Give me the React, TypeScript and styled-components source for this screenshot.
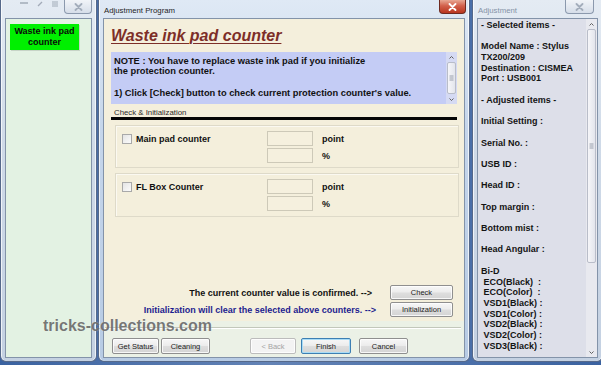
import styled, { createGlobalStyle } from "styled-components";

const GlobalStyle = createGlobalStyle`
  html, body {
    margin: 0;
    padding: 0;
  }
  body {
    width: 601px;
    height: 365px;
    overflow: hidden;
    background: #3c64a0;
    font-family: "Liberation Sans", Arial, sans-serif;
  }
`;

const Desktop = styled.div`
  position: relative;
  display: flex;
  align-items: flex-start;
  width: 601px;
  height: 365px;
  overflow: hidden;
  background: linear-gradient(90deg, #3a62a0 0%, #6383b6 45%, #3a62a0 100%);
`;

const Window = styled.div<{ $width: number; $gap?: number; $active?: boolean }>`
  display: flex;
  flex-direction: column;
  flex-shrink: 0;
  width: ${(p) => p.$width}px;
  height: 362px;
  margin-left: ${(p) => p.$gap ?? 0}px;
  padding: 0 4px 3px 4px;
  box-sizing: border-box;
  border: 1px solid #56698a;
  border-top: none;
  border-radius: 0 0 6px 6px;
  background: ${(p) =>
    p.$active
      ? "linear-gradient(180deg, #dfe9f5 0%, #c6d6eb 35%, #b7cbe4 100%)"
      : "linear-gradient(180deg, #e4ebf3 0%, #cfdae8 40%, #c4d1e2 100%)"};
  box-shadow: inset 1px 0 0 rgba(255, 255, 255, 0.7), inset -1px 0 0 rgba(255, 255, 255, 0.7);
`;

const TitleBar = styled.div`
  display: flex;
  align-items: flex-start;
  height: 18px;
  flex-shrink: 0;
`;

const Caption = styled.span<{ $faded?: boolean }>`
  padding: 6px 0 0 1px;
  font-size: 7.8px;
  line-height: 9px;
  color: ${(p) => (p.$faded ? "#8592a6" : "#1f1f1f")};
`;

const Glyphs = styled.div`
  display: flex;
  gap: 9px;
  padding: 1px 0 0 15px;
  opacity: 0.55;
`;

const CloseButton = styled.div<{ $active?: boolean; $width: number; $right: number }>`
  display: flex;
  align-items: center;
  justify-content: center;
  width: ${(p) => p.$width}px;
  height: 14px;
  margin-left: auto;
  margin-right: ${(p) => p.$right}px;
  box-sizing: border-box;
  border: 1px solid ${(p) => (p.$active ? "#6e2a20" : "#8b99ad")};
  border-top: none;
  border-radius: 0 0 4px 4px;
  background: ${(p) =>
    p.$active
      ? "linear-gradient(180deg, #e8a894 0%, #d2604b 45%, #b9361f 100%)"
      : "linear-gradient(180deg, #f1f4f8 0%, #d6dee9 100%)"};
`;

const Client = styled.div<{ $bg: string }>`
  position: relative;
  display: flex;
  flex-direction: column;
  flex: 1;
  min-height: 0;
  background: ${(p) => p.$bg};
  border: 1px solid #8393a9;
  overflow: hidden;
`;

const Badge = styled.div`
  display: flex;
  align-items: center;
  justify-content: center;
  width: 69px;
  height: 26px;
  margin: 5px 0 0 4px;
  background: #00f000;
  text-align: center;
  font-size: 9px;
  font-weight: bold;
  line-height: 11px;
  color: #0a0a0a;
  box-shadow: 1px 1px 0 rgba(0, 0, 0, 0.12);
`;

const Panel = styled.div`
  display: flex;
  flex-direction: column;
  height: 302px;
  padding: 8px 7px 2px;
  box-sizing: border-box;
  background: #f4efdc;
`;

const Heading = styled.h1`
  margin: 0;
  font-size: 16px;
  line-height: 18px;
  font-weight: bold;
  font-style: italic;
  color: #7d2e28;
  text-decoration: underline;
  text-decoration-thickness: 1px;
  text-underline-offset: 2px;
`;

const Note = styled.div`
  display: flex;
  height: 52px;
  flex-shrink: 0;
  margin-top: 7px;
  background: #c4ccf5;
`;

const NoteText = styled.div`
  flex: 1;
  padding: 3.5px 0 0 3px;
  font-size: 9.3px;
  font-weight: bold;
  line-height: 10.7px;
  color: #111;
`;

const Scrollbar = styled.div<{ $track: string }>`
  display: flex;
  flex-direction: column;
  align-items: center;
  width: 11px;
  flex-shrink: 0;
  background: ${(p) => p.$track};
`;

const Arrow = styled.div`
  display: flex;
  align-items: center;
  justify-content: center;
  height: 10px;
  flex-shrink: 0;
`;

const Thumb = styled.div<{ $grow?: boolean; $height?: number }>`
  display: flex;
  align-items: center;
  justify-content: center;
  width: 9px;
  height: ${(p) => (p.$height ? `${p.$height}px` : "auto")};
  flex: ${(p) => (p.$grow ? 1 : "none")};
  box-sizing: border-box;
  border: 1px solid #b9bdc9;
  border-radius: 2px;
  background: linear-gradient(90deg, #f6f6f9, #e3e5ec);
`;

const Track = styled.div`
  flex: 1;
`;

const GroupHeader = styled.div`
  display: flex;
  margin-top: 4px;
  border-bottom: 3px solid #050505;
  font-size: 7.8px;
  line-height: 9px;
`;

const GroupLabel = styled.span`
  padding-left: 3px;
  color: #2a2a2a;
`;

const CounterBox = styled.div<{ $height: number }>`
  display: grid;
  grid-template-columns: 136px 46px auto;
  grid-template-rows: 15px 15px;
  column-gap: 9px;
  row-gap: 2px;
  align-items: center;
  flex-shrink: 0;
  height: ${(p) => p.$height}px;
  margin: 5px -2px 0 4px;
  padding: 5px 6px 0;
  box-sizing: border-box;
  border: 1px solid #dedac9;
  box-shadow: inset 1px 1px 0 #fbf9f1;
`;

const CheckLabel = styled.label`
  display: flex;
  align-items: center;
  gap: 4px;
  font-size: 9px;
  font-weight: bold;
  color: #111;
`;

const CheckSquare = styled.span`
  width: 8px;
  height: 8px;
  border: 1px solid #a9a9a9;
  background: linear-gradient(135deg, #e4e4e4, #fbfbfb);
`;

const Field = styled.div`
  height: 15px;
  box-sizing: border-box;
  border: 1px solid #cdc9b8;
  background: #f5f0de;
`;

const Unit = styled.span`
  font-size: 9px;
  font-weight: bold;
  color: #111;
`;

const Spacer = styled.div`
  flex: 1;
`;

const ActionRow = styled.div<{ $gap: number }>`
  display: flex;
  align-items: center;
  justify-content: flex-end;
  gap: ${(p) => p.$gap}px;
  height: 15px;
  margin: 0 4px 2px 0;
`;

const ActionText = styled.span<{ $color: string }>`
  font-size: 9px;
  font-weight: bold;
  color: ${(p) => p.$color};
`;

const Button = styled.div<{ $w: number; $ml?: number; $h?: number; $state?: "default" | "disabled" }>`
  display: flex;
  align-items: center;
  justify-content: center;
  width: ${(p) => p.$w}px;
  height: ${(p) => p.$h ?? 15}px;
  margin-left: ${(p) => p.$ml ?? 0}px;
  box-sizing: border-box;
  border: 1px solid
    ${(p) => (p.$state === "default" ? "#3d7fb3" : p.$state === "disabled" ? "#bcbcbc" : "#8f8f8f")};
  border-radius: 2px;
  background: ${(p) =>
    p.$state === "disabled"
      ? "#f3f3f3"
      : "linear-gradient(180deg, #f7f7f7 0%, #ececec 48%, #dedede 52%, #d4d4d4 100%)"};
  box-shadow: ${(p) =>
    p.$state === "default" ? "inset 0 0 0 1px #a9dcf6" : "inset 0 0 0 1px rgba(255,255,255,0.8)"};
  font-size: 7.5px;
  color: ${(p) => (p.$state === "disabled" ? "#a3a3a3" : "#222")};
`;

const Divider = styled.div`
  height: 1px;
  margin: 6px 3px 0 1px;
  background: #c2c7bb;
  box-shadow: 0 1px 0 #ffffff;
`;

const ButtonBar = styled.div`
  display: flex;
  margin-top: 10px;
  padding-left: 8px;
`;

const InfoArea = styled.div`
  display: flex;
  flex: 1;
  min-height: 0;
`;

const InfoText = styled.div`
  flex: 1;
  padding: 1px 0 0 3px;
`;

const InfoLine = styled.div`
  height: 10.7px;
  font-size: 9px;
  font-weight: bold;
  line-height: 10.7px;
  white-space: pre;
  color: #141414;
`;

const Watermark = styled.div`
  position: absolute;
  left: 43px;
  top: 318px;
  font-size: 16px;
  line-height: 16px;
  font-weight: bold;
  color: rgba(95, 95, 95, 0.85);
  text-shadow: 0 0 1px rgba(255, 255, 255, 0.6);
  pointer-events: none;
`;

const CloseIcon = ({ color }: { color: string }) => (
  <svg width="9" height="8" viewBox="0 0 9 8">
    <path d="M1.5 1 L7.5 7 M7.5 1 L1.5 7" stroke={color} strokeWidth="1.8" strokeLinecap="round" />
  </svg>
);

const Chevron = ({ up }: { up?: boolean }) => (
  <svg width="5" height="3" viewBox="0 0 5 3">
    <path d={up ? "M0.5 2.5 L2.5 0.5 L4.5 2.5" : "M0.5 0.5 L2.5 2.5 L4.5 0.5"} stroke="#606060" strokeWidth="1" fill="none" />
  </svg>
);

const Grip = () => (
  <svg width="5" height="6" viewBox="0 0 5 6">
    <path d="M0.5 1 H4.5 M0.5 3 H4.5 M0.5 5 H4.5" stroke="#9aa0ad" strokeWidth="1" />
  </svg>
);

const info = [
  "- Selected items -",
  "",
  "Model Name : Stylus",
  "TX200/209",
  "Destination : CISMEA",
  "Port : USB001",
  "",
  "- Adjusted items -",
  "",
  "Initial Setting :",
  "",
  "Serial No. :",
  "",
  "USB ID :",
  "",
  "Head ID :",
  "",
  "Top margin :",
  "",
  "Bottom mist :",
  "",
  "Head Angular :",
  "",
  "Bi-D",
  " ECO(Black)  :",
  " ECO(Color)  :",
  " VSD1(Black) :",
  " VSD1(Color) :",
  " VSD2(Black) :",
  " VSD2(Color) :",
  " VSD3(Black) :",
];

const counters = [
  { label: "Main pad counter", height: 43 },
  { label: "FL Box Counter", height: 44 },
];

const App = () => {
  return (
    <Desktop>
      <GlobalStyle />

      <Window $width={97}>
        <TitleBar>
          <Glyphs>
            <svg width="8" height="5" viewBox="0 0 8 5">
              <path d="M0 2 H8" stroke="#6d7888" strokeWidth="1.5" />
            </svg>
            <svg width="6" height="6" viewBox="0 0 6 6">
              <path d="M1 5 L5 1" stroke="#6d7888" strokeWidth="1.2" />
            </svg>
            <svg width="6" height="6" viewBox="0 0 6 6">
              <path d="M0 1 H6 M0 3 H6 M0 5 H6" stroke="#6d7888" strokeWidth="1" />
            </svg>
          </Glyphs>
          <CloseButton $width={28} $right={0}>
            <CloseIcon color="#a3adbb" />
          </CloseButton>
        </TitleBar>
        <Client $bg="#e3f2e3">
          <Badge>
            Waste ink pad
            <br />
            counter
          </Badge>
        </Client>
      </Window>

      <Window $width={372} $gap={1} $active>
        <TitleBar>
          <Caption>Adjustment Program</Caption>
          <CloseButton $active $width={27} $right={-1}>
            <CloseIcon color="#ffffff" />
          </CloseButton>
        </TitleBar>
        <Client $bg="#ebf1e6">
          <Panel>
            <Heading>Waste ink pad counter</Heading>
            <Note>
              <NoteText>
                NOTE : You have to replace waste ink pad if you initialize
                <br />
                the protection counter.
                <br />
                <br />
                1) Click [Check] button to check current protection counter's value.
              </NoteText>
              <Scrollbar $track="#d5daf3">
                <Arrow>
                  <Chevron up />
                </Arrow>
                <Thumb $grow>
                  <Grip />
                </Thumb>
                <Arrow>
                  <Chevron />
                </Arrow>
              </Scrollbar>
            </Note>
            <GroupHeader>
              <GroupLabel>Check &amp; Initialization</GroupLabel>
            </GroupHeader>
            {counters.map((c) => (
              <CounterBox key={c.label} $height={c.height}>
                <CheckLabel>
                  <CheckSquare />
                  {c.label}
                </CheckLabel>
                <Field />
                <Unit>point</Unit>
                <span />
                <Field />
                <Unit>%</Unit>
              </CounterBox>
            ))}
            <Spacer />
            <ActionRow $gap={18}>
              <ActionText $color="#111111">The current counter value is confirmed. --&gt;</ActionText>
              <Button $w={63}>Check</Button>
            </ActionRow>
            <ActionRow $gap={14}>
              <ActionText $color="#1d1d8f">Initialization will clear the selected above counters. --&gt;</ActionText>
              <Button $w={63}>Initialization</Button>
            </ActionRow>
          </Panel>
          <Divider />
          <ButtonBar>
            <Button $w={47} $h={16}>Get Status</Button>
            <Button $w={49} $h={16} $ml={2}>Cleaning</Button>
            <Button $w={46} $h={16} $ml={40} $state="disabled">&lt; Back</Button>
            <Button $w={50} $h={16} $ml={5} $state="default">Finish</Button>
            <Button $w={49} $h={16} $ml={8}>Cancel</Button>
          </ButtonBar>
        </Client>
      </Window>

      <Window $width={131} $gap={2}>
        <TitleBar>
          <Caption $faded>Adjustment</Caption>
          <CloseButton $width={29} $right={4}>
            <CloseIcon color="#a3adbb" />
          </CloseButton>
        </TitleBar>
        <Client $bg="#dddfe9">
          <InfoArea>
            <InfoText>
              {info.map((line, i) => (
                <InfoLine key={i}>{line}</InfoLine>
              ))}
            </InfoText>
            <Scrollbar $track="#e8e9ef">
              <Arrow>
                <Chevron up />
              </Arrow>
              <Thumb $height={234}>
                <Grip />
              </Thumb>
              <Track />
              <Arrow>
                <Chevron />
              </Arrow>
            </Scrollbar>
          </InfoArea>
        </Client>
      </Window>

      <Watermark>tricks-collections.com</Watermark>
    </Desktop>
  );
};

export default App;
